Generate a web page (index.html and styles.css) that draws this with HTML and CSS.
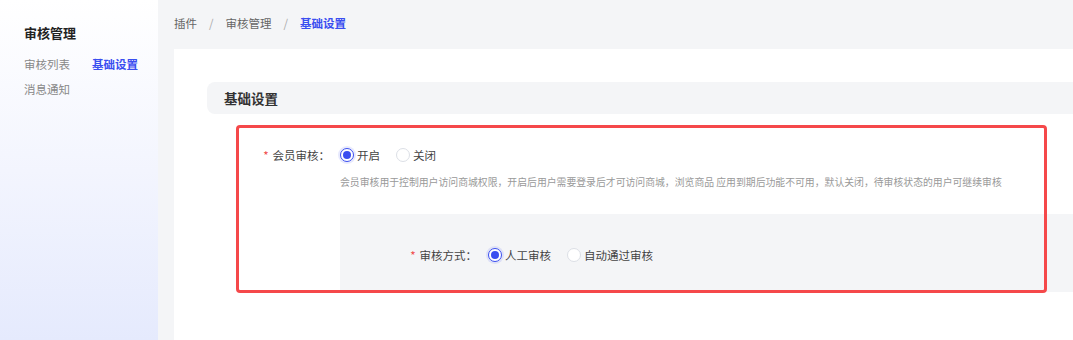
FILE: index.html
```html
<!DOCTYPE html>
<html lang="zh-CN">
<head>
    <meta charset="UTF-8">
    <meta name="viewport" content="width=device-width, initial-scale=1.0">
    <title>基础设置</title>
    <link rel="stylesheet" href="styles.css">
</head>
<body>

<div class="layout">
    <!-- ===== SIDEBAR ===== -->
    <aside class="sidebar">
        <h3 class="sidebar-title">审核管理</h3>
        <nav class="sidebar-nav">
            <a class="nav-item">审核列表</a>
            <a class="nav-item active">基础设置</a>
            <a class="nav-item">消息通知</a>
        </nav>
    </aside>

    <!-- ===== MAIN ===== -->
    <main class="main">
        <div class="breadcrumb">
            <span>插件</span>
            <span class="sep">/</span>
            <span>审核管理</span>
            <span class="sep">/</span>
            <span class="current">基础设置</span>
        </div>

        <div class="card">
            <div class="section-header">基础设置</div>

            <div class="form">
                <div class="form-row">
                    <label class="form-label"><i class="req">*</i>会员审核：</label>
                    <div class="radio-group">
                        <span class="radio checked"></span><span class="radio-text">开启</span>
                        <span class="radio"></span><span class="radio-text">关闭</span>
                    </div>
                </div>
                <p class="form-help">会员审核用于控制用户访问商城权限，开启后用户需要登录后才可访问商城，浏览商品 应用到期后功能不可用，默认关闭，待审核状态的用户可继续审核</p>

                <div class="sub-panel">
                    <div class="form-row">
                        <label class="form-label sub"><i class="req">*</i>审核方式：</label>
                        <div class="radio-group">
                            <span class="radio checked"></span><span class="radio-text">人工审核</span>
                            <span class="radio"></span><span class="radio-text">自动通过审核</span>
                        </div>
                    </div>
                </div>
            </div>

            <!-- highlight frame drawn over the form -->
            <div class="highlight"></div>
        </div>
    </main>
</div>

</body>
</html>
```

FILE: styles.css
```css
:root {
    --primary: #333;
    --muted: #999;
    --accent: #3a4ef0;
    --page-bg: #f4f5f7;
    --border: #dcdfe6;
    --font-family: "Noto Sans CJK SC", "Noto Sans", sans-serif;
}
* {
    box-sizing: border-box;
}
body {
    font-family: var(--font-family);
    color: var(--primary);
    margin: 0;
    overflow: hidden;
}
.layout {
    display: flex;
    height: 100vh;
}
.sidebar {
    width: 158px;
    flex-shrink: 0;
    padding: 24px 0 0 24px;
    background: linear-gradient(180deg, #ffffff 0%, #f3f5fe 50%, #e5eafd 100%);
}
.sidebar-title {
    margin: 0 0 10px;
    font-size: 13px;
    font-weight: 700;
    line-height: 18px;
    color: #222;
}
.sidebar-nav {
    display: flex;
    flex-wrap: wrap;
    column-gap: 22px;
}
.nav-item {
    font-size: 11.5px;
    line-height: 25px;
    color: #888;
}
.nav-item.active {
    color: var(--accent);
    font-weight: 700;
}
.main {
    flex: 1;
    display: flex;
    flex-direction: column;
    min-width: 0;
    background: var(--page-bg);
    padding-left: 16px;
}
.breadcrumb {
    height: 49px;
    display: flex;
    align-items: center;
    padding-bottom: 4px;
    font-size: 11.5px;
    color: #666;
}
.breadcrumb .sep {
    margin: 0 12px;
    color: #aaa;
}
.breadcrumb .current {
    color: var(--accent);
    font-weight: 700;
}
.card {
    flex: 1;
    position: relative;
    background: #fff;
    padding: 33px 0 0 33px;
}
.section-header {
    height: 32px;
    display: flex;
    align-items: center;
    padding-left: 17px;
    background: var(--page-bg);
    border-radius: 8px 0 0 8px;
    font-size: 13.5px;
    font-weight: 700;
    color: #333;
}
.form {
    margin-top: 25px;
}
.form-row {
    display: flex;
    align-items: center;
    height: 32px;
}
.form-label {
    width: 123px;
    margin-right: 10px;
    text-align: right;
    font-size: 11.5px;
    color: #444;
}
.form-label.sub {
    width: 137px;
    margin-right: 11px;
}
.req {
    font-style: normal;
    color: #f04848;
    margin-right: 4px;
}
.radio-group {
    display: flex;
    align-items: center;
    font-size: 11.5px;
    color: #444;
}
.radio {
    width: 14px;
    height: 14px;
    border: 1px solid var(--border);
    border-radius: 50%;
    background: #fff;
    display: flex;
    align-items: center;
    justify-content: center;
}
.radio.checked {
    border-color: var(--accent);
    box-shadow: 0 0 0 2px rgba(58, 78, 240, 0.12);
}
.radio.checked::after {
    content: "";
    width: 8px;
    height: 8px;
    border-radius: 50%;
    background: var(--accent);
}
.radio-text {
    margin: 0 16px 0 3px;
}
.form-help {
    margin: 3px 0 0 133px;
    font-size: 9.85px;
    line-height: 16px;
    color: var(--muted);
    white-space: nowrap;
}
.sub-panel {
    margin: 24px 0 0 133px;
    padding: 25px 0 21px;
    background: var(--page-bg);
}
.highlight {
    position: absolute;
    left: 62px;
    top: 76px;
    width: 811px;
    height: 168px;
    border: 3px solid #f5484a;
    border-radius: 4px;
    pointer-events: none;
}
```
